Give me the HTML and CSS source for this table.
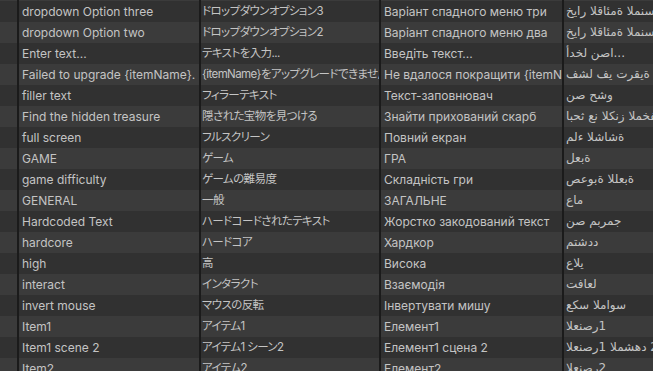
FILE: index.html
```html
<!DOCTYPE html>
<html>
<head>
<meta charset="utf-8">
<link rel="stylesheet" href="styles.css">
</head>
<body>
<div class="table">
  <div class="row light"><div class="cell c0"></div><div class="cell c1">dropdown Option one</div><div class="cell c2">ドロップダウンオプション1</div><div class="cell c3">Варіант спадного меню один</div><div class="cell c4"><span class="ar">خيار القائمة المنسدلة واحد</span></div></div>
  <div class="row dark"><div class="cell c0"></div><div class="cell c1">dropdown Option three</div><div class="cell c2">ドロップダウンオプション3</div><div class="cell c3">Варіант спадного меню три</div><div class="cell c4"><span class="ar">خيار القائمة المنسدلة ثلاثة</span></div></div>
  <div class="row light"><div class="cell c0"></div><div class="cell c1">dropdown Option two</div><div class="cell c2">ドロップダウンオプション2</div><div class="cell c3">Варіант спадного меню два</div><div class="cell c4"><span class="ar">خيار القائمة المنسدلة اثنين</span></div></div>
  <div class="row dark"><div class="cell c0"></div><div class="cell c1">Enter text...</div><div class="cell c2">テキストを入力...</div><div class="cell c3">Введіть текст...</div><div class="cell c4"><span class="ar">أدخل نصا...</span></div></div>
  <div class="row light"><div class="cell c0"></div><div class="cell c1">Failed to upgrade {itemName}.</div><div class="cell c2">{itemName}をアップグレードできませんでした。</div><div class="cell c3">Не вдалося покращити {itemName}.</div><div class="cell c4"><span class="ar">فشل في ترقية {itemName}.</span></div></div>
  <div class="row dark"><div class="cell c0"></div><div class="cell c1">filler text</div><div class="cell c2">フィラーテキスト</div><div class="cell c3">Текст-заповнювач</div><div class="cell c4"><span class="ar">نص حشو</span></div></div>
  <div class="row light"><div class="cell c0"></div><div class="cell c1">Find the hidden treasure</div><div class="cell c2">隠された宝物を見つける</div><div class="cell c3">Знайти прихований скарб</div><div class="cell c4"><span class="ar">ابحث عن الكنز المخفي</span></div></div>
  <div class="row dark"><div class="cell c0"></div><div class="cell c1">full screen</div><div class="cell c2">フルスクリーン</div><div class="cell c3">Повний екран</div><div class="cell c4"><span class="ar">ملء الشاشة</span></div></div>
  <div class="row light"><div class="cell c0"></div><div class="cell c1">GAME</div><div class="cell c2">ゲーム</div><div class="cell c3">ГРА</div><div class="cell c4"><span class="ar">لعبة</span></div></div>
  <div class="row dark"><div class="cell c0"></div><div class="cell c1">game difficulty</div><div class="cell c2">ゲームの難易度</div><div class="cell c3">Складність гри</div><div class="cell c4"><span class="ar">صعوبة اللعبة</span></div></div>
  <div class="row light"><div class="cell c0"></div><div class="cell c1">GENERAL</div><div class="cell c2">一般</div><div class="cell c3">ЗАГАЛЬНЕ</div><div class="cell c4"><span class="ar">عام</span></div></div>
  <div class="row dark"><div class="cell c0"></div><div class="cell c1">Hardcoded Text</div><div class="cell c2">ハードコードされたテキスト</div><div class="cell c3">Жорстко закодований текст</div><div class="cell c4"><span class="ar">نص مبرمج</span></div></div>
  <div class="row light"><div class="cell c0"></div><div class="cell c1">hardcore</div><div class="cell c2">ハードコア</div><div class="cell c3">Хардкор</div><div class="cell c4"><span class="ar">متشدد</span></div></div>
  <div class="row dark"><div class="cell c0"></div><div class="cell c1">high</div><div class="cell c2">高</div><div class="cell c3">Висока</div><div class="cell c4"><span class="ar">عالي</span></div></div>
  <div class="row light"><div class="cell c0"></div><div class="cell c1">interact</div><div class="cell c2">インタラクト</div><div class="cell c3">Взаємодія</div><div class="cell c4"><span class="ar">تفاعل</span></div></div>
  <div class="row dark"><div class="cell c0"></div><div class="cell c1">invert mouse</div><div class="cell c2">マウスの反転</div><div class="cell c3">Інвертувати мишу</div><div class="cell c4"><span class="ar">عكس الماوس</span></div></div>
  <div class="row light"><div class="cell c0"></div><div class="cell c1">Item1</div><div class="cell c2">アイテム1</div><div class="cell c3">Елемент1</div><div class="cell c4"><span class="ar">العنصر1</span></div></div>
  <div class="row dark"><div class="cell c0"></div><div class="cell c1">Item1 scene 2</div><div class="cell c2">アイテム1 シーン2</div><div class="cell c3">Елемент1 сцена 2</div><div class="cell c4"><span class="ar">العنصر1 المشهد 2</span></div></div>
  <div class="row light"><div class="cell c0"></div><div class="cell c1">Item2</div><div class="cell c2">アイテム2</div><div class="cell c3">Елемент2</div><div class="cell c4"><span class="ar">العنصر2</span></div></div>
</div>
</body>
</html>
```

FILE: styles.css
```css
html, body {
  margin: 0;
  padding: 0;
  background: #313131;
  overflow: hidden;
}

.table {
  margin-top: -20px;
  display: flex;
  flex-direction: column;
  font-family: Inter, "Noto Sans CJK JP", "DejaVu Sans", sans-serif;
  font-size: 12px;
  color: #c4c4c4;
}

.row {
  display: flex;
  height: 21px;
}

.row.dark { background: #313131; }
.row.light { background: #3b3b3b; }

.cell {
  box-sizing: border-box;
  height: 21px;
  line-height: 21px;
  border-right: 2px solid #1b1b1b;
  white-space: nowrap;
  overflow: hidden;
  padding-left: 3px;
}

.c0 { width: 19px; padding-left: 0; }
.c1 { width: 182px; }
.c2 {
  width: 180px;
  padding-left: 1px;
  font-family: Inter, "Noto Sans CJK JP", sans-serif;
  font-feature-settings: "palt";
  font-size: 11.5px;
  letter-spacing: -0.6px;
}
.c3 { width: 183px; }
.c4 {
  flex: 1;
  border-right: none;
  padding-left: 2px;
  font-family: "DejaVu Sans", sans-serif;
  font-size: 12px;
}

.ar {
  direction: ltr;
  unicode-bidi: bidi-override;
}
```
